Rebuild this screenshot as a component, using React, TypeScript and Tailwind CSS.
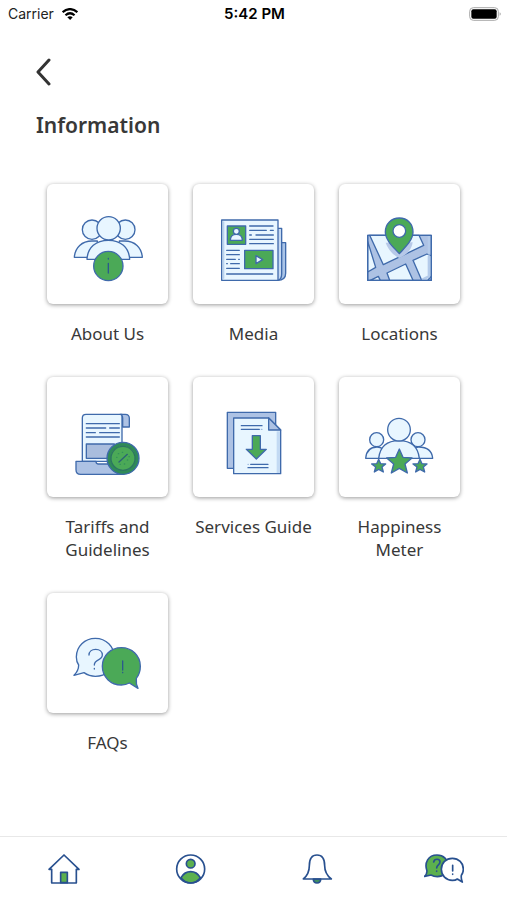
import type { ReactNode } from 'react';

interface IconFrameProps {
  viewBox: string;
  className: string;
  children: ReactNode;
}

const IconFrame = ({ viewBox, className, children }: IconFrameProps) => (
  <svg
    viewBox={viewBox}
    className={className}
    fill="none"
    strokeLinecap="round"
    strokeLinejoin="round"
    aria-hidden="true"
  >
    {children}
  </svg>
);

const TileIcon = ({ children }: { children: ReactNode }) => (
  <IconFrame
    viewBox="84 84 240 240"
    className="size-20 stroke-[#3f6aab] stroke-[4]"
  >
    {children}
  </IconFrame>
);

const AboutIcon = () => (
  <TileIcon>
    <g className="fill-[#e8f6ff]">
      <circle cx="156" cy="161" r="29" />
      <circle cx="256" cy="161" r="29" />
      <path d="M103 244c2-30 23-49 53-49h16v49z" />
      <path d="M307 244c-2-30-23-49-53-49h-16v49z" />
      <path d="M141 250c2-36 27-57 64-57s62 21 64 57z" />
      <circle cx="206" cy="157" r="35" />
    </g>
    <circle cx="205" cy="270" r="44" className="fill-[#4ba957]" />
    <path d="M205 262v29M205 247v2" className="stroke-[#2b5a8c]" />
  </TileIcon>
);

const MediaIcon = () => (
  <TileIcon>
    <path d="M274 200h25v92c0 14-8 21-24 21" className="fill-[#a9c4e8]" />
    <path d="M274 157h13v137c0 12-4 19-14 19" className="fill-[#c5d9f2]" />
    <path d="M107 132h169v181H107z" className="fill-[#e8f6ff]" />
    <path d="M113 138v169" className="stroke-[#b9d3ef]" />
    <path
      d="M124 150h55v55h-55zM176 223h85v55h-85z"
      className="fill-[#4ba957]"
    />
    <path
      d="M133 193c0-13 6-18 18-18s18 5 18 18z"
      className="fill-[#e8f6ff]"
    />
    <circle cx="151" cy="166" r="9" className="fill-[#e8f6ff]" />
    <path d="M210 239v24l20-12z" className="fill-[#e8f6ff]" />
    <path d="M191 150h70M191 163h50M253 163h9M191 177h5M210 177h52M191 190h71M191 203h71M122 223h38M122 236h38M122 250h26M158 250h2M122 263h2M134 263h26M122 277h38M122 294h138" />
  </TileIcon>
);

const LocationsIcon = () => (
  <TileIcon>
    <path d="M107 178h191v135H107z" className="fill-[#adc2e4]" />
    <path
      d="M113 178h148l14 30-121 58zM107 196l24 78-24 14zM165 291l56-27 22 49h-70zM243 253l42-19 13 6v60l-11 13h-18zM115 313l24-12 6 12z"
      className="fill-[#e8f6ff]"
    />
    <path
      d="M291 180v52M291 242v59l-18 9"
      className="stroke-[#b4cbea] stroke-[8]"
    />
    <path
      d="M161 200c10 27 28 40 41 46 20-8 37-24 40-47z"
      className="fill-[#b7c9e8] stroke-none"
    />
    <path d="M107 178h191v135H107z" />
    <path
      d="M202 126c-24 0-42 18-42 42 0 25 26 47 42 65 16-18 41-40 41-65 0-24-17-42-41-42z"
      className="fill-[#4ba957]"
    />
    <circle cx="202" cy="165" r="19" className="fill-white" />
  </TileIcon>
);

const TariffsIcon = () => (
  <TileIcon>
    <g transform="translate(0 3)">
      <path
        d="M127 274V144c0-7 4-11 11-11h108v141z"
        className="fill-[#e8f6ff]"
      />
      <path
        d="M240 133h16c8 0 12 4 12 12v26h-20v-26c0-7-2-12-8-12z"
        className="fill-[#adc2e4]"
      />
      <path
        d="M108 274h60c0 6 2 8 6 8h78v31H122c-9 0-14-5-14-14z"
        className="fill-[#adc2e4]"
      />
      <path d="M139 222h84v43h-84z" className="fill-[#a9bddd]" />
      <path d="M139 161h99M139 174h58M209 174h29M139 188h27M179 188h59M139 201h99" />
      <circle
        cx="249"
        cy="265"
        r="42"
        className="stroke-[#2f8a58] stroke-[12]"
      />
      <circle cx="249" cy="265" r="48" />
      <circle
        cx="249"
        cy="265"
        r="36"
        className="fill-[#4ba957] stroke-[#2c7560]"
      />
      <path d="m237 276 25-23" className="stroke-[#2c6375]" />
      <path
        d="M235 251h1M247 247h1M230 262h1M262 270h1M267 260h1M253 282h1M240 283h1"
        className="stroke-[#32905a]"
      />
    </g>
  </TileIcon>
);

const ServicesIcon = () => (
  <TileIcon>
    <g transform="translate(0 3)">
      <path d="M124 127h145v168H124z" className="fill-[#adc2e4]" />
      <path d="M143 144h105l36 36v131H143z" className="fill-[#e8f6ff]" />
      <path d="M282 184v125h-10V184z" className="fill-[#c3daf3] stroke-none" />
      <path d="M248 144v36h36z" className="fill-[#adc2e4]" />
      <path d="M166 167h62M166 178h54M186 293h60M194 283h52" />
      <path d="M226 178h2M186 283h1" className="stroke-[#9bb8de]" />
      <path
        d="M199 197h24v41h18l-30 29-30-29h18z"
        className="fill-[#4ba957]"
      />
    </g>
  </TileIcon>
);

const HappinessIcon = () => (
  <TileIcon>
    <g transform="translate(0 3)">
      <g className="fill-[#e8f6ff]">
        <circle cx="134" cy="209" r="21" />
        <circle cx="258" cy="209" r="21" />
        <path d="M101 265c2-23 14-34 34-34 9 0 14 3 18 6l-12 28z" />
        <path d="M302 265c-2-23-18-34-42-34-8 0-13 3-17 6l19 28z" />
        <path d="M140 265c4-34 25-53 61-53s57 19 61 53z" />
        <circle cx="201" cy="179" r="34" />
      </g>
      <g className="fill-[#4ba957]">
        <path d="m202 237 11 25 27 2-21 18 7 27-24-14-24 14 7-27-21-18 27-2z" />
        <path d="m140 268 6 13 15 1-11 9 4 15-14-8-13 8 4-15-12-9 15-1z" />
        <path d="m264 268 6 13 15 1-11 9 4 15-14-8-13 8 4-15-12-9 15-1z" />
      </g>
    </g>
  </TileIcon>
);

const FaqIcon = () => (
  <TileIcon>
    <path
      d="M116 240c-5-7-7-16-7-24 0-32 25-56 57-56s57 24 57 57-25 57-57 57c-13 0-24-4-34-11l-30 8c9-9 14-18 14-31z"
      className="fill-[#e8f6ff]"
    />
    <path d="M147 210c0-10 8-17 20-17s20 7 20 17c0 18-24 11-24 30M163 250v2" />
    <path
      d="M289 280c8-10 12-22 12-36 0-32-25-56-57-56s-57 24-57 56 25 56 57 56c9 0 17-2 24-6l26 16c-5-9-6-19-5-30z"
      className="fill-[#4ba957]"
    />
    <path d="M248 228v27M248 262v1" className="stroke-[#2b5a8c]" />
  </TileIcon>
);

const navIconClass = 'h-8 w-10 stroke-[#28508f] stroke-5';

const HomeIcon = () => (
  <IconFrame viewBox="130 82 120 96" className={navIconClass}>
    <path d="M183 171v-31h20v31z" className="fill-[#5cb04e]" />
    <path d="M148 131l45-43 45 43h-8v41h-74v-41z" />
  </IconFrame>
);

const ProfileIcon = () => (
  <IconFrame viewBox="510 82 120 96" className={navIconClass}>
    <path
      d="M543 156c7-12 17-18 29-18s22 6 29 18c-8 11-17 16-29 16s-21-5-29-16z"
      className="fill-[#5cb04e]"
    />
    <circle cx="572" cy="114" r="13" className="fill-[#5cb04e]" />
    <circle cx="572" cy="130" r="42" />
  </IconFrame>
);

const BellIcon = () => (
  <IconFrame viewBox="129 82 120 96" className={navIconClass}>
    <path d="M178 160c0 16 22 16 22 0z" className="fill-[#3f8f62]" />
    <path d="M148 160c14-12 18-23 18-40 0-19 7-32 23-32s23 13 23 32c0 17 5 28 20 40z" />
  </IconFrame>
);

const ChatIcon = () => (
  <IconFrame viewBox="510 82 120 96" className={navIconClass}>
    <path
      d="M519 136c-9-25 4-48 30-48 20 0 33 14 33 32s-14 33-32 33c-8 0-14-2-19-5l-19 4c5-5 7-9 7-16z"
      className="fill-[#5cb04e]"
    />
    <path d="M539 109c2-11 19-11 19 0 0 9-10 8-10 18M548 136v1" />
    <path
      d="M622 149c4-5 6-11 6-18 0-19-14-33-33-33s-33 14-33 33 14 33 33 33c6 0 11-1 15-4l15 9c-3-6-4-12-3-20z"
      className="fill-white"
    />
    <path d="M596 119v17M596 145v1" />
  </IconFrame>
);

const tiles = [
  { label: 'About Us', href: '#about', icon: <AboutIcon /> },
  { label: 'Media', href: '#media', icon: <MediaIcon /> },
  { label: 'Locations', href: '#locations', icon: <LocationsIcon /> },
  { label: 'Tariffs and Guidelines', href: '#tariffs', icon: <TariffsIcon /> },
  { label: 'Services Guide', href: '#services', icon: <ServicesIcon /> },
  { label: 'Happiness Meter', href: '#happiness', icon: <HappinessIcon /> },
  { label: 'FAQs', href: '#faqs', icon: <FaqIcon /> },
];

const navItems = [
  { label: 'Home', href: '#home', icon: <HomeIcon /> },
  { label: 'Profile', href: '#profile', icon: <ProfileIcon /> },
  { label: 'Notifications', href: '#notifications', icon: <BellIcon /> },
  { label: 'Information', href: '#information', icon: <ChatIcon /> },
];

const StatusBar = () => (
  <div className="grid h-7 grid-cols-[1fr_auto_1fr] items-center pl-2 pr-1.5 font-['Inter',sans-serif] text-sm text-[#222]">
    <div className="flex items-center gap-2">
      <span>Carrier</span>
      <svg viewBox="0 0 51 38" className="h-3 w-4" aria-hidden="true">
        <g fill="none" stroke="#000" strokeWidth="7">
          <path d="M2 13c14-13 33-13 47 0" />
          <path d="M11 23c9-8 20-8 29 0" />
        </g>
        <path d="M17 29c5-4 12-4 17 0l-8 9z" />
      </svg>
    </div>
    <span className="text-[15px] font-semibold text-black">5:42 PM</span>
    <svg
      viewBox="0 0 96 42"
      className="h-[14px] w-8 justify-self-end"
      aria-hidden="true"
    >
      <rect
        x="2"
        y="2"
        width="86"
        height="38"
        rx="11"
        fill="#fff"
        stroke="#aaa"
        strokeWidth="3"
      />
      <rect x="7" y="7" width="76" height="28" rx="6" />
      <path d="M92 16c4 2 4 8 0 10z" fill="#999" />
    </svg>
  </div>
);

export default function App() {
  return (
    <div className="flex min-h-screen flex-col bg-white font-['Noto_Sans',sans-serif] text-[#383838]">
      <StatusBar />

      <header className="px-9 pt-7">
        <button type="button" aria-label="Back" className="-ml-1 block p-1">
          <svg
            viewBox="0 0 16 28"
            className="-my-0.5 h-7 w-4"
            fill="none"
            stroke="#333"
            strokeWidth="3"
            strokeLinecap="round"
            strokeLinejoin="round"
            aria-hidden="true"
          >
            <path d="M13 2 2 14l11 12" />
          </svg>
        </button>
        <h1 className="mt-5 text-[21px] leading-[34px] font-semibold">
          Information
        </h1>
      </header>

      <main className="grid grid-cols-3 gap-x-[25px] gap-y-8 px-[47px] pt-[42px] pb-20">
        {tiles.map((tile) => (
          <a key={tile.label} href={tile.href} className="block text-center">
            <span className="flex h-30 items-center justify-center rounded-md bg-white shadow-[0_1px_4px_rgba(0,0,0,0.4)]">
              {tile.icon}
            </span>
            <span className="mt-[18px] block text-[17px] leading-[23px]">
              {tile.label}
            </span>
          </a>
        ))}
      </main>

      <nav className="mt-auto grid h-16 grid-cols-4 border-t border-[#e8e8e8]">
        {navItems.map((item) => (
          <a
            key={item.label}
            href={item.href}
            aria-label={item.label}
            className="flex items-center justify-center"
          >
            {item.icon}
          </a>
        ))}
      </nav>
    </div>
  );
}
